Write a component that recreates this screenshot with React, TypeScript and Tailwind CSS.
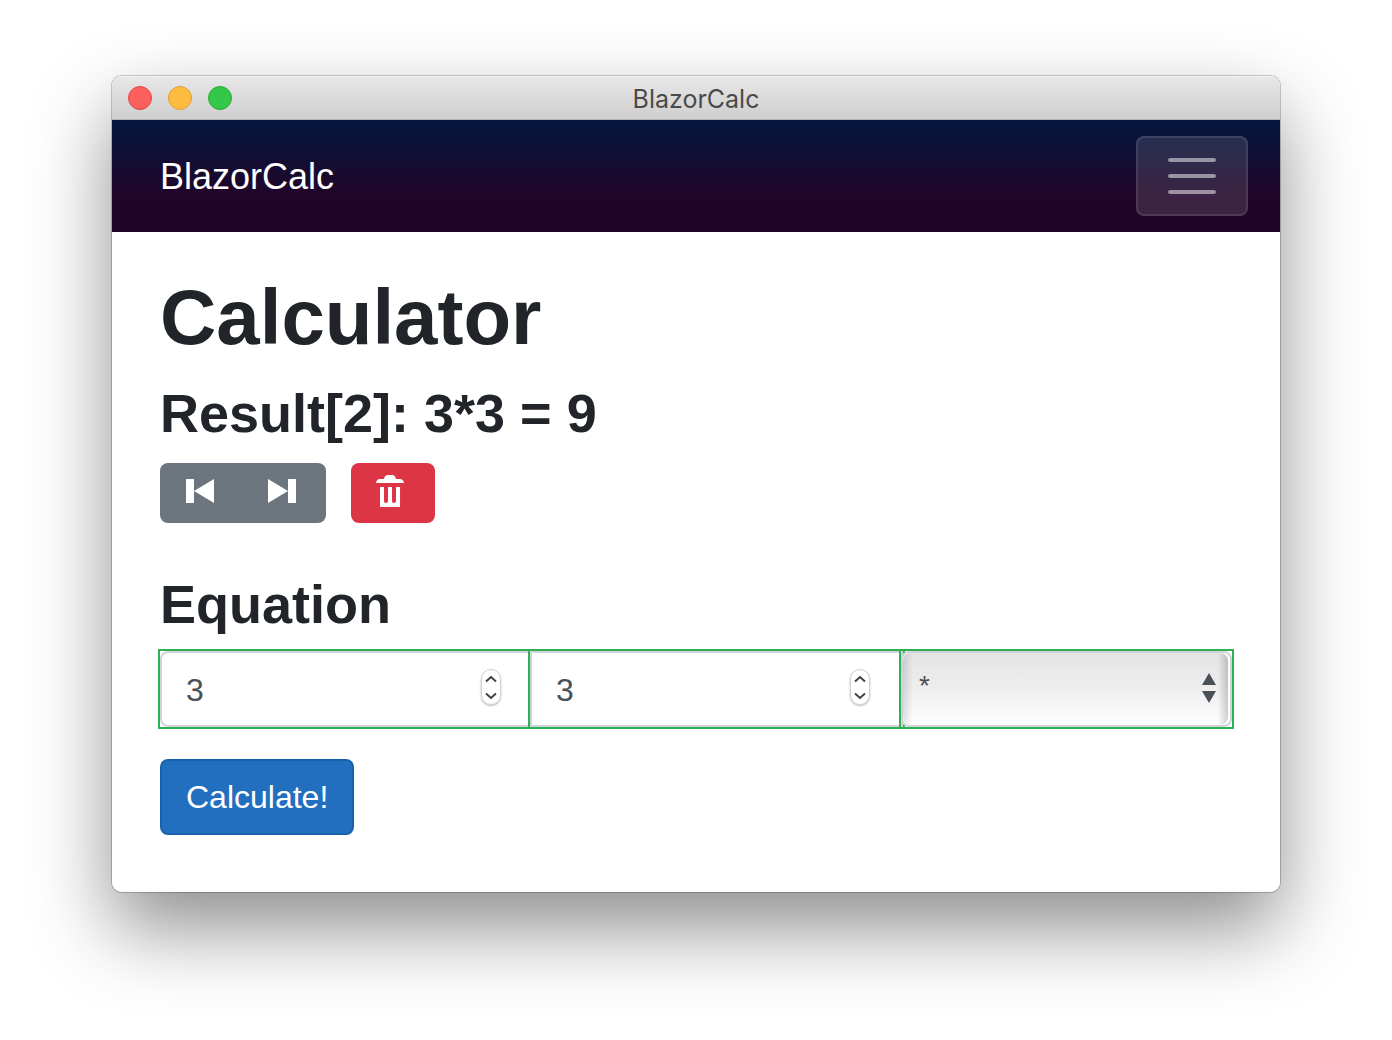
import React from "react";

function TitleBar() {
  return (
    <header className="grid h-11 grid-cols-[1fr_auto_1fr] items-center border-b border-[#b4b4b4] bg-linear-to-b from-[#e8e8e8] to-[#cfcfcf] px-4 shadow-[inset_0_1px_0_#f6f6f6]">
      <div className="flex gap-4">
        <button aria-label="Close" className="size-6 rounded-full border border-[#e14640] bg-[#fc605c]" />
        <button aria-label="Minimize" className="size-6 rounded-full border border-[#dfa035] bg-[#fdbc40]" />
        <button aria-label="Zoom" className="size-6 rounded-full border border-[#27aa35] bg-[#34c84a]" />
      </div>
      <span className="pt-0.5 font-['Inter'] text-[25px] leading-8 text-[#4a4a4a]">BlazorCalc</span>
    </header>
  );
}

function NavBar() {
  return (
    <nav className="flex items-center justify-between bg-[linear-gradient(180deg,#03173e_0%,#220428_70%)] py-4 pr-8 pl-12">
      <a href="#" className="pt-0.5 text-4xl text-white">
        BlazorCalc
      </a>
      <button
        aria-label="Toggle navigation"
        className="flex h-20 w-28 flex-col items-center justify-center gap-3 rounded-lg border-2 border-white/10 bg-white/12"
      >
        <span className="h-1 w-12 rounded-full bg-white/50" />
        <span className="h-1 w-12 rounded-full bg-white/50" />
        <span className="h-1 w-12 rounded-full bg-white/50" />
      </button>
    </nav>
  );
}

function Icon({ d }: { d: string }) {
  return (
    <svg viewBox="0 0 8 8" className="size-8 fill-white" aria-hidden="true">
      <path d={d} />
    </svg>
  );
}

function NumberField({ label, cell, frame }: { label: string; cell: string; frame: string }) {
  return (
    <div className={`min-w-0 outline-2 outline-[#30b055] ${cell}`}>
      <div className={`flex h-19 items-center border-2 border-[#ced4da] bg-white ${frame}`}>
        <input
          type="number"
          aria-label={label}
          defaultValue={3}
          className="h-full w-full min-w-0 flex-1 appearance-none pt-0.5 pl-6 text-[32px] text-[#495057] outline-none [-moz-appearance:textfield] [&::-webkit-inner-spin-button]:appearance-none"
        />
        <div className="mr-[27px] mb-1 flex h-9 w-5 shrink-0 flex-col rounded-full border border-[#d2d2d2] shadow-[0_1px_2px_rgba(0,0,0,0.3)]">
          <button aria-label={`Increase ${label}`} className="flex flex-1 items-center justify-center">
            <svg viewBox="0 0 12 8" className="h-2 w-3 fill-none stroke-[#404040] stroke-2">
              <path d="M1 6.500 6 2l5 4.500" />
            </svg>
          </button>
          <button aria-label={`Decrease ${label}`} className="flex flex-1 items-center justify-center">
            <svg viewBox="0 0 12 8" className="h-2 w-3 fill-none stroke-[#404040] stroke-2">
              <path d="M1 1.500 6 6l5-4.500" />
            </svg>
          </button>
        </div>
      </div>
    </div>
  );
}

function OperatorField() {
  return (
    <div className="relative min-w-0 flex-[331] outline-2 outline-[#30b055]">
      <div className="flex h-19 rounded-lg border-2 border-[#ced4da] bg-white">
        <select
          aria-label="Operator"
          className="mr-0.5 w-full appearance-none rounded-lg bg-[linear-gradient(90deg,rgba(0,0,0,0.12),transparent_10px,transparent_calc(100%-10px),rgba(0,0,0,0.18)),linear-gradient(180deg,#e4e4e4,#eeeeee_50%,#ffffff)] pb-1.5 pl-4 text-[28px] text-[#495057] outline-none"
        >
          <option>*</option>
          <option>+</option>
          <option>-</option>
          <option>/</option>
        </select>
      </div>
      <svg viewBox="0 0 14 30" className="pointer-events-none absolute top-[22px] right-4 h-[30px] w-3.5 fill-[#495057]" aria-hidden="true">
        <path d="M7 0l7 12H0zM7 30l7-12H0z" />
      </svg>
    </div>
  );
}

export default function App() {
  return (
    <div className="min-h-screen bg-white px-28 pt-19 pb-10 font-['Liberation_Sans',sans-serif]">
      <div className="rounded-[10px] shadow-[0_0_0_1px_rgba(0,0,0,0.2),0_36px_80px_rgba(0,0,0,0.45)]">
        <div className="overflow-hidden rounded-[10px] bg-white">
          <TitleBar />
          <NavBar />
          <main className="px-12 pt-[37px] pb-[57px] text-[#212529]">
            <h1 className="mb-[15px] text-[78px] leading-24 font-bold">Calculator</h1>
            <h3 className="mb-4 text-[54px] leading-[67px] font-bold">Result[2]: 3*3 = 9</h3>
            <div className="flex gap-[25px]">
              <div className="flex overflow-hidden rounded-lg bg-[#6c757d]">
                <button aria-label="Previous result" className="flex h-15 w-[83px] items-start pt-3 pl-[26px]">
                  <Icon d="M0 1v6h2V1zM2 4l5 3V1z" />
                </button>
                <button aria-label="Next result" className="flex h-15 w-[83px] items-start pt-3 pl-[25px]">
                  <Icon d="M0 1v6l5-3zM5 1v6h2V1z" />
                </button>
              </div>
              <button aria-label="Delete result" className="flex h-15 w-21 items-start rounded-lg bg-[#dc3545] pt-3 pl-[25px]">
                <Icon d="M3 0c-.55 0-1 .45-1 1H1c-.55 0-1 .45-1 1h7c0-.55-.45-1-1-1H5c0-.55-.45-1-1-1zM1 3v4.810c0 .11.080.190.190.190h4.630c.11 0 .190-.080.190-.190V3H5v3.500c0 .280-.220.500-.500.500S4 6.780 4 6.500V3H3v3.500c0 .280-.220.500-.500.500S2 6.780 2 6.500V3z" />
              </button>
            </div>
            <h3 className="mt-12 mb-[13px] text-[54px] leading-[67px] font-bold">Equation</h3>
            <form onSubmit={(e) => e.preventDefault()}>
              <div className="flex">
                <NumberField label="First number" cell="flex-[370]" frame="rounded-l-lg" />
                <NumberField label="Second number" cell="relative -mr-0.5 flex-[373]" frame="pr-1" />
                <OperatorField />
              </div>
              <button
                type="submit"
                className="mt-8 h-19 rounded-lg border-2 border-[#1861ac] bg-[#236fbf] px-6 text-[32px] text-white"
              >
                Calculate!
              </button>
            </form>
          </main>
        </div>
      </div>
    </div>
  );
}
